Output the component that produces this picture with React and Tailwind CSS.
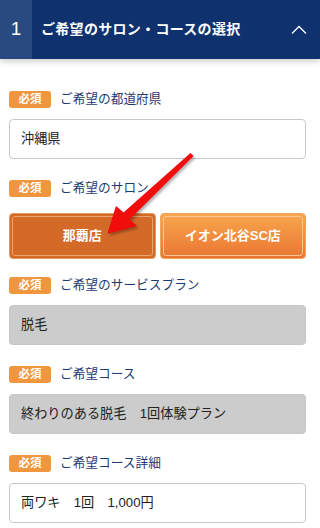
import React from 'react';

const FONT = { fontFamily: '"Liberation Sans", "Noto Sans CJK JP", sans-serif' };

function Badge() {
  return (
    <span className="inline-flex h-[17px] w-[42px] items-center justify-center rounded-[3px] bg-[#f0963f] text-[11.5px] font-bold leading-none text-white">
      必須
    </span>
  );
}

function FieldLabel({ children }) {
  return (
    <div className="flex h-[17px] items-center gap-[9px]">
      <Badge />
      <span className="text-[12.7px] leading-none text-[#1d3a72]">{children}</span>
    </div>
  );
}

function TextBox({ children, gray }) {
  return (
    <div
      className={`mt-[11px] flex h-[40px] items-center rounded-[4px] border px-[11px] text-[13.2px] text-[#222] ${
        gray ? 'border-[#c6c6c6] bg-[#cccccc]' : 'border-[#c8c8c8] bg-white'
      }`}
    >
      {children}
    </div>
  );
}

export default function App() {
  return (
    <div className="relative min-h-[528px] w-[320px] overflow-hidden bg-white" style={FONT}>
      {/* Header */}
      <div className="relative z-10 flex h-[59px] items-stretch bg-[#0f316d] shadow-[0_3px_6px_rgba(0,0,0,0.18)]">
        <div className="flex w-[32px] items-center justify-center bg-[#294a80] text-[19px] text-white">1</div>
        <div className="flex flex-1 items-center pl-[9px] text-[14px] font-bold tracking-[0.3px] text-white">
          ご希望のサロン・コースの選択
        </div>
        <div className="flex w-[40px] items-center justify-center pr-[3px]">
          <svg width="16" height="10" viewBox="0 0 16 10">
            <path d="M1 8.5 L8 1.5 L15 8.5" fill="none" stroke="white" strokeWidth="1.3" />
          </svg>
        </div>
      </div>

      {/* Form */}
      <div className="pl-[9px] pr-[14px] pt-[32px]">
        <FieldLabel>ご希望の都道府県</FieldLabel>
        <TextBox>沖縄県</TextBox>

        <div className="mt-[21px]">
          <FieldLabel>ご希望のサロン</FieldLabel>
          <div className="mt-[16px] grid grid-cols-2 gap-[4px]">
            <button className="h-[46px] rounded-[4px] border border-[#e49a5c] bg-[#d46a28] p-[2px]">
              <div className="flex h-full items-center justify-center rounded-[3px] border border-[#eaa471] text-[13px] font-bold text-white">
                那覇店
              </div>
            </button>
            <button className="h-[46px] rounded-[4px] border border-[#f2a35b] bg-gradient-to-b from-[#f7a64d] to-[#ea7531] p-[2px]">
              <div className="flex h-full items-center justify-center rounded-[3px] border border-[#fbc596] text-[13px] font-bold text-white">
                イオン北谷SC店
              </div>
            </button>
          </div>
        </div>

        <div className="mt-[18px]">
          <FieldLabel>ご希望のサービスプラン</FieldLabel>
          <TextBox gray>脱毛</TextBox>
        </div>

        <div className="mt-[21px]">
          <FieldLabel>ご希望コース</FieldLabel>
          <TextBox gray>終わりのある脱毛　1回体験プラン</TextBox>
        </div>

        <div className="mt-[21px]">
          <FieldLabel>ご希望コース詳細</FieldLabel>
          <TextBox>両ワキ　1回　1,000円</TextBox>
        </div>
      </div>

      {/* Red annotation arrow */}
      <svg className="pointer-events-none absolute left-0 top-0" width="320" height="528" viewBox="0 0 320 528">
        <defs>
          <filter id="sh" x="-20%" y="-20%" width="140%" height="140%">
            <feDropShadow dx="1.5" dy="2" stdDeviation="1.6" floodColor="#000" floodOpacity="0.35" />
          </filter>
        </defs>
        <polygon
          points="190.5,153 193.5,156 129.5,219.5 137,226 107.5,233.5 116,206 123.5,212.5"
          fill="#f2070d"
          filter="url(#sh)"
        />
      </svg>
    </div>
  );
}
